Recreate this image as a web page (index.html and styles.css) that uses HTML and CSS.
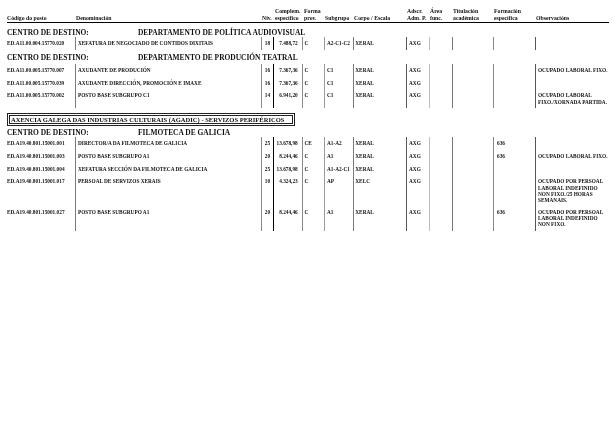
FILE: index.html
```html
<!DOCTYPE html>
<html lang="gl">
<head>
<meta charset="utf-8">
<title>Relación de postos</title>
<link rel="stylesheet" href="styles.css">
</head>
<body>
<div class="page">
  <div class="head">
    <div class="hc">Código do posto</div>
    <div class="hc">Denominación</div>
    <div class="hc">Niv.</div>
    <div class="hc">Complem.<br>específico</div>
    <div class="hc">Forma<br>prov.</div>
    <div class="hc">Subgrupo</div>
    <div class="hc">Corpo / Escala</div>
    <div class="hc">Adscr.<br>Adm. P.</div>
    <div class="hc">Área<br>func.</div>
    <div class="hc">Titulación<br>académica</div>
    <div class="hc">Formación<br>específica</div>
    <div class="hc">Observacións</div>
  </div>

  <div class="centro g1"><span class="lbl">CENTRO DE DESTINO:</span><span>DEPARTAMENTO DE POLÍTICA AUDIOVISUAL</span></div>
  <div class="rows">
    <div class="row">
      <div class="c c1">ED.A11.00.004.15770.020</div><div class="c c2">XEFATURA DE NEGOCIADO DE CONTIDOS DIXITAIS</div><div class="c c3">18</div><div class="c c4">7.488,72</div><div class="c c5">C</div><div class="c c6">A2-C1-C2</div><div class="c c7">XERAL</div><div class="c c8">AXG</div><div class="c c9"></div><div class="c c10"></div><div class="c c11"></div><div class="c c12"></div>
    </div>
  </div>

  <div class="centro g2"><span class="lbl">CENTRO DE DESTINO:</span><span>DEPARTAMENTO DE PRODUCIÓN TEATRAL</span></div>
  <div class="rows">
    <div class="row">
      <div class="c c1">ED.A11.00.005.15770.007</div><div class="c c2">AXUDANTE DE PRODUCIÓN</div><div class="c c3">16</div><div class="c c4">7.367,36</div><div class="c c5">C</div><div class="c c6">C1</div><div class="c c7">XERAL</div><div class="c c8">AXG</div><div class="c c9"></div><div class="c c10"></div><div class="c c11"></div><div class="c c12">OCUPADO LABORAL FIXO.</div>
    </div>
    <div class="row">
      <div class="c c1">ED.A11.00.005.15770.039</div><div class="c c2">AXUDANTE DIRECCIÓN, PROMOCIÓN E IMAXE</div><div class="c c3">16</div><div class="c c4">7.367,36</div><div class="c c5">C</div><div class="c c6">C1</div><div class="c c7">XERAL</div><div class="c c8">AXG</div><div class="c c9"></div><div class="c c10"></div><div class="c c11"></div><div class="c c12"></div>
    </div>
    <div class="row">
      <div class="c c1">ED.A11.00.005.15770.002</div><div class="c c2">POSTO BASE SUBGRUPO C1</div><div class="c c3">14</div><div class="c c4">6.941,20</div><div class="c c5">C</div><div class="c c6">C1</div><div class="c c7">XERAL</div><div class="c c8">AXG</div><div class="c c9"></div><div class="c c10"></div><div class="c c11"></div><div class="c c12">OCUPADO LABORAL<br>FIXO./XORNADA PARTIDA.</div>
    </div>
  </div>

  <div class="axencia">AXENCIA GALEGA DAS INDUSTRIAS CULTURAIS (AGADIC) - SERVIZOS PERIFÉRICOS</div>

  <div class="centro g3"><span class="lbl">CENTRO DE DESTINO:</span><span>FILMOTECA DE GALICIA</span></div>
  <div class="rows">
    <div class="row">
      <div class="c c1">ED.A19.40.801.15001.001</div><div class="c c2">DIRECTOR/A DA FILMOTECA DE GALICIA</div><div class="c c3">25</div><div class="c c4">13.678,98</div><div class="c c5">CE</div><div class="c c6">A1-A2</div><div class="c c7">XERAL</div><div class="c c8">AXG</div><div class="c c9"></div><div class="c c10"></div><div class="c c11">636</div><div class="c c12"></div>
    </div>
    <div class="row">
      <div class="c c1">ED.A19.40.801.15001.003</div><div class="c c2">POSTO BASE SUBGRUPO A1</div><div class="c c3">20</div><div class="c c4">8.244,46</div><div class="c c5">C</div><div class="c c6">A1</div><div class="c c7">XERAL</div><div class="c c8">AXG</div><div class="c c9"></div><div class="c c10"></div><div class="c c11">636</div><div class="c c12">OCUPADO LABORAL FIXO.</div>
    </div>
    <div class="row">
      <div class="c c1">ED.A19.40.801.15001.004</div><div class="c c2">XEFATURA SECCIÓN DA FILMOTECA DE GALICIA</div><div class="c c3">25</div><div class="c c4">13.678,98</div><div class="c c5">C</div><div class="c c6">A1-A2-C1</div><div class="c c7">XERAL</div><div class="c c8">AXG</div><div class="c c9"></div><div class="c c10"></div><div class="c c11"></div><div class="c c12"></div>
    </div>
    <div class="row">
      <div class="c c1">ED.A19.40.801.15001.017</div><div class="c c2">PERSOAL DE SERVIZOS XERAIS</div><div class="c c3">10</div><div class="c c4">4.324,23</div><div class="c c5">C</div><div class="c c6">AP</div><div class="c c7">XELC</div><div class="c c8">AXG</div><div class="c c9"></div><div class="c c10"></div><div class="c c11"></div><div class="c c12">OCUPADO POR PERSOAL<br>LABORAL INDEFINIDO<br>NON FIXO./25 HORAS<br>SEMANAIS.</div>
    </div>
    <div class="row">
      <div class="c c1">ED.A19.40.801.15001.027</div><div class="c c2">POSTO BASE SUBGRUPO A1</div><div class="c c3">20</div><div class="c c4">8.244,46</div><div class="c c5">C</div><div class="c c6">A1</div><div class="c c7">XERAL</div><div class="c c8">AXG</div><div class="c c9"></div><div class="c c10"></div><div class="c c11">636</div><div class="c c12">OCUPADO POR PERSOAL<br>LABORAL INDEFINIDO<br>NON FIXO.</div>
    </div>
  </div>
</div>
</body>
</html>
```

FILE: styles.css
```css
html, body {
  margin: 0;
  padding: 0;
  background: #fff;
}
body {
  font-family: "Liberation Serif", "Times New Roman", serif;
  font-weight: bold;
  color: #111;
}
.page {
  padding: 8px 6px 0 7px;
  width: 602px;
  will-change: transform;
}
.head {
  display: grid;
  grid-template-columns: 68px 186px 12px 29px 22px 29px 53px 23px 23px 41px 42px 74px;
  align-items: end;
  font-size: 5.75px;
  line-height: 6.9px;
  border-bottom: 1px solid #000;
  white-space: nowrap;
}
.hc { padding-left: 1px; }
.hc:first-child { padding-left: 0; }
.hc:nth-child(4), .hc:nth-child(5) { padding-left: 2px; }
.centro {
  display: flex;
  font-size: 7.45px;
  line-height: 8px;
  white-space: nowrap;
}
.centro .lbl { width: 131px; }
.g1 { margin-top: 6px; }
.g2 { margin-top: 4px; }
.g3 { margin-top: 3.5px; }
.rows { margin-top: 0.4px; }
.g2 + .rows { margin-top: 2px; }
.g3 + .rows { margin-top: 0; }
.row {
  display: grid;
  grid-template-columns: 68px 186px 12px 29px 22px 29px 53px 23px 23px 41px 42px 74px;
  font-size: 5.3px;
  line-height: 6.3px;
  white-space: nowrap;
}
.c {
  padding: 3.2px 0 3.2px 2px;
}
.c1 { padding-left: 0; }
.c2 { border-left: 1px solid #7a7a7a; }
.c3 { border-left: 1px solid #8a8a8a; padding-left: 0; text-align: center; }
.c4 { border-left: 1.6px solid #000; padding-left: 0; padding-right: 4.3px; text-align: right; }
.c5 { border-left: 1px solid #8a8a8a; padding-left: 1.5px; }
.c6 { border-left: 1px solid #9a9a9a; }
.c7 { border-left: 1px solid #7a7a7a; padding-left: 1.3px; }
.c8 { border-left: 1px solid #555; }
.c9 { border-left: 1px solid #bdbdbd; }
.c10 { border-left: 1px solid #777; }
.c11 { border-left: 1px solid #888; padding-left: 3px; }
.c12 { border-left: 1px solid #555; line-height: 6.1px; }
.axencia {
  margin-top: 5px;
  width: 281px;
  border: 3px double #222;
  padding: 0 0 0 1px;
  font-size: 6.55px;
  line-height: 7px;
  white-space: nowrap;
}
```
